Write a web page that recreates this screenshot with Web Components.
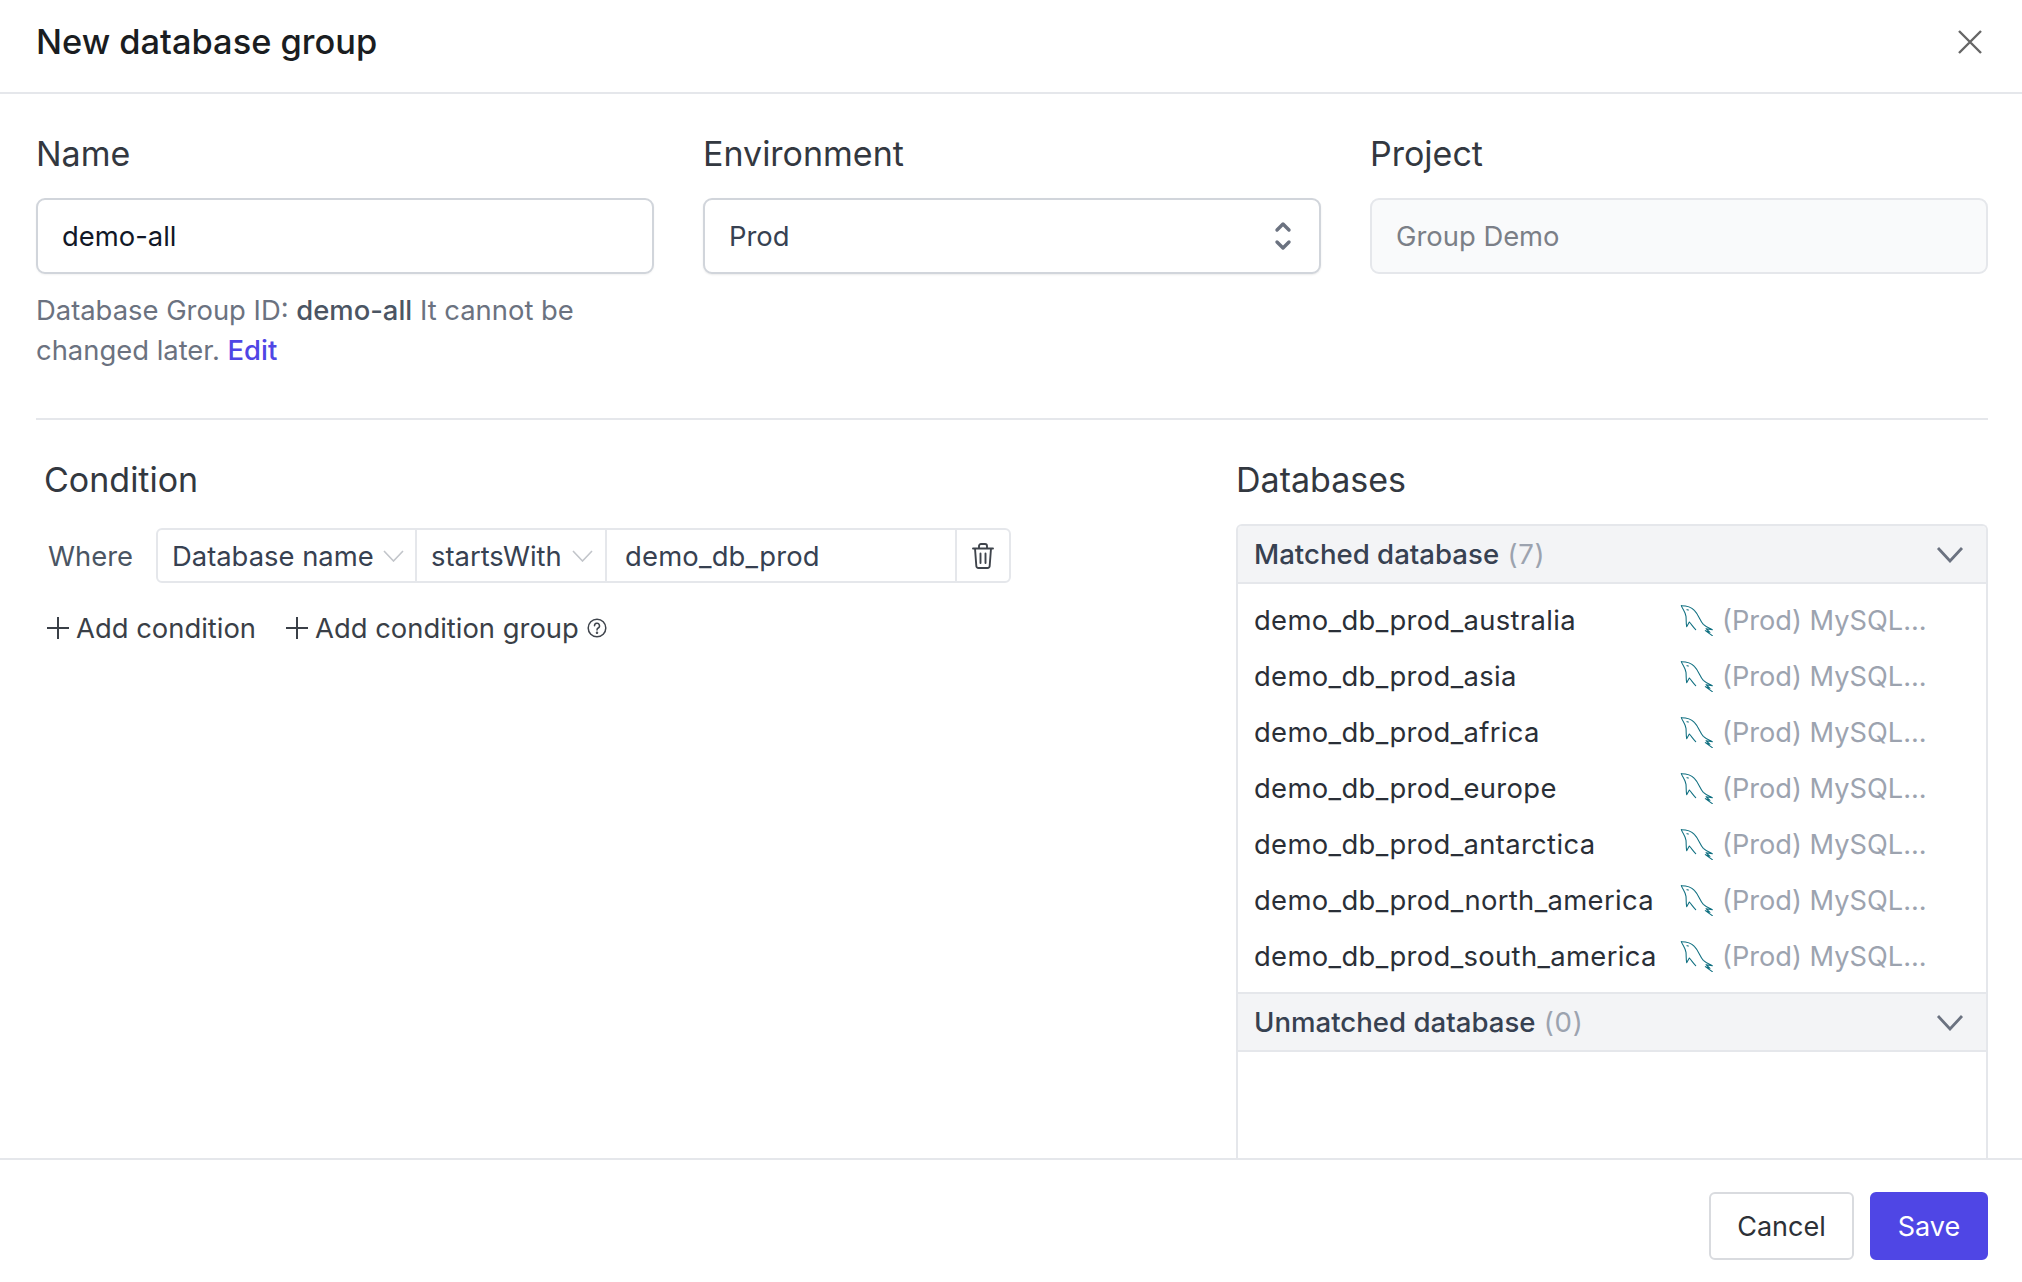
<!DOCTYPE html>
<html lang="en"><head><meta charset="utf-8"><title>New database group</title>
<style>
html,body{margin:0;padding:0;background:#fff}
body{font-family:Inter,"Liberation Sans",sans-serif;font-size:27.4px;color:#1f2937}
</style></head><body>
<modal-dialog heading="New database group">
  <form-field label="Name">
    <text-box value="demo-all"></text-box>
    <field-help><span>Database Group ID: </span><b>demo-all</b><span> It cannot be </span><span>changed later. </span><a>Edit</a></field-help>
  </form-field>
  <form-field label="Environment"><select-box value="Prod"></select-box></form-field>
  <form-field label="Project"><text-box value="Group Demo" disabled></text-box></form-field>
</modal-dialog>
<script>
const ICONS={
 close:'<svg width="24" height="24" viewBox="0 0 24 24" fill="none" stroke="#666" stroke-width="2.4"><path d="M1 1l22 22M23 1L1 23"/></svg>',
 stepper:'<svg width="18" height="30" viewBox="0 0 18 30" fill="none" stroke="#6b7280" stroke-width="3.4" stroke-linecap="round" stroke-linejoin="round"><path d="M3 9l6-6 6 6M3 21l6 6 6-6"/></svg>',
 chev:'<svg width="21" height="12" viewBox="0 0 21 12" fill="none" stroke="#c2c5ca" stroke-width="1.6"><path d="M1 1l9.500 10L20 1"/></svg>',
 chevBig:'<svg width="28" height="17" viewBox="0 0 28 17" fill="none" stroke="#6b7280" stroke-width="2.8"><path d="M2 2l12 13L26 2"/></svg>',
 trash:'<svg width="22" height="26" viewBox="0 0 22 26" fill="none" stroke="#3f444c" stroke-width="1.900" stroke-linejoin="round" stroke-linecap="round"><path d="M1 5.500h20M7 5.500V3a2 2 0 0 1 2-2h4a2 2 0 0 1 2 2v2.500M3 5.500l1.300 17.200A2.200 2.200 0 0 0 6.500 25h9a2.200 2.200 0 0 0 2.200-2.300L19 5.500M8.500 10.500v9.500M13.500 10.500v9.500"/></svg>',
 plus:'<svg width="22" height="22" viewBox="0 0 22 22" fill="none" stroke="#3a3f47" stroke-width="2"><path d="M11 0v22M0 11h22"/></svg>',
 help:'<svg width="20" height="20" viewBox="0 0 20 20" fill="none" stroke="#3f444c" stroke-width="1.500" stroke-linecap="round"><circle cx="10" cy="10" r="8.800"/><path d="M7.500 7.800a2.500 2.500 0 1 1 3.700 2.200c-.8.500-1.200 1-1.200 1.900"/><circle cx="10" cy="14.700" r=".5"/></svg>',
 mysql:'<svg width="33" height="31" viewBox="63 42 99 93" fill="none" stroke="#0f6f80" stroke-width="3.200" stroke-linejoin="round" stroke-linecap="round"><path d="M67 44C80 44 95 46 106 58C119 71 122 88 133 100C140 107 150 111 160 116L141 113L153 124L139 119L160 134"/><path d="M67 44C71 55 79 62 81 76C82 88 81 98 83 107L91 93C97 100 103 108 110 116"/><path d="M84 56l4 1"/></svg>'
};
function def(name,css,render){
  customElements.define(name,class extends HTMLElement{
    connectedCallback(){
      if(this.shadowRoot)return;
      const r=this.attachShadow({mode:'open'});
      r.innerHTML='<style>'+css+'</style>'+render(this);
    }
  });
}
const a=(e,n)=>e.getAttribute(n)||'';
def('ui-icon',':host{display:inline-flex;align-items:center;justify-content:center;flex:none}',e=>ICONS[a(e,'name')]);
def('text-box',`:host{display:flex;align-items:center;box-sizing:border-box;height:76px;border:2px solid #d1d5db;border-radius:9px;padding:0 24px;background:#fff;color:#111827;font-size:27.400px;box-shadow:0 1px 2px rgba(0,0,0,.05)}
:host([disabled]){background:#f9fafb;border-color:#e5e7eb;color:#7b7f87;box-shadow:none}`,e=>`<span>${a(e,'value')}</span>`);
def('select-box',`:host{display:flex;align-items:center;justify-content:space-between;box-sizing:border-box;height:76px;border:2px solid #d1d5db;border-radius:9px;padding:0 27px 0 24px;background:#fff;color:#374151;font-size:27.400px;box-shadow:0 1px 2px rgba(0,0,0,.08)}`,e=>`<span>${a(e,'value')}</span><ui-icon name="stepper"></ui-icon>`);
def('field-help',`:host{display:block;margin-top:16px;font-size:27.400px;line-height:40px;color:#6b7280}
::slotted(b){font-weight:500;color:#4b5563}
::slotted(a){font-weight:500;color:#4f46e5}`,e=>`<slot></slot>`);
def('form-field',`:host{display:block}
.l{font-size:34px;line-height:40px;height:40px;margin-bottom:24px;color:#333840}`,e=>`<div class="l">${a(e,'label')}</div><slot></slot>`);
def('section-title',`:host{display:block;font-size:34px;line-height:40px;height:40px;color:#333840}`,e=>`<slot></slot>`);
def('cond-select',`:host{display:flex;align-items:center;justify-content:space-between;box-sizing:border-box;height:100%;color:#374151;border-right:2px solid #e5e7eb;flex:none}
`,e=>`<span>${a(e,'value')}</span><ui-icon name="chev"></ui-icon>`);
def('condition-row',`:host{display:flex;align-items:center;height:55px;font-size:27.400px}
.w{width:112px;padding-left:4px;box-sizing:border-box;color:#4b5563;flex:none}
.g{display:flex;align-items:stretch;box-sizing:border-box;width:855px;height:55px;border:2px solid #e5e7eb;border-radius:6px}
cond-select:nth-of-type(1){width:259px;padding:0 11px 0 14px}
cond-select:nth-of-type(2){width:190px;padding:0 12px 0 14px}
.v{width:350px;box-sizing:border-box;padding-left:18px;display:flex;align-items:center;color:#374151;border-right:2px solid #e5e7eb;letter-spacing:.2px}
.d{flex:1;display:flex;align-items:center;justify-content:center}`,e=>`<span class="w">Where</span><div class="g"><cond-select value="Database name"></cond-select><cond-select value="startsWith"></cond-select><div class="v">demo_db_prod</div><div class="d"><ui-icon name="trash"></ui-icon></div></div>`);
def('add-actions',`:host{display:flex;align-items:center;height:40px;margin-top:25px;font-size:27.400px;color:#3a3f47;padding-left:3px}
.b{display:flex;align-items:center;gap:7px}
.b+.b{margin-left:30px}
.h{margin-left:8px}`,e=>`<span class="b"><ui-icon name="plus"></ui-icon>Add condition</span><span class="b"><ui-icon name="plus"></ui-icon>Add condition group</span><ui-icon class="h" name="help"></ui-icon>`);
def('db-row',`:host{display:flex;align-items:center;height:56px;padding-left:16px;font-size:27.400px;color:#2a2f37}
.n{width:426px;flex:none;white-space:nowrap;letter-spacing:.35px}
.t{margin-left:9px;color:#9ca3af;white-space:nowrap;font-size:27.200px}`,e=>`<span class="n">${a(e,'name')}</span><ui-icon name="mysql"></ui-icon><span class="t">(Prod) MySQL...</span>`);
def('db-group',`:host{display:block}
.h{display:flex;align-items:center;justify-content:space-between;box-sizing:border-box;height:58px;padding:0 22px 0 16px;background:#f3f4f6;border-bottom:2px solid #e5e7eb;font-weight:500;font-size:27.600px;color:#374151}
:host([next]) .h{border-top:2px solid #e5e7eb;height:60px}
.c{color:#9ca3af;font-weight:400;margin-left:1px;letter-spacing:.7px}
.r{padding:8px 0 8px}`,e=>`<div class="h"><span>${a(e,'heading')} <span class="c">(${a(e,'count')})</span></span><ui-icon name="chevBig"></ui-icon></div><div class="r"><slot></slot></div>`);
def('db-panel',`:host{display:block;box-sizing:border-box;border:2px solid #e5e7eb;border-bottom:0;border-radius:6px 6px 0 0;height:800px;overflow:hidden}`,e=>`<slot></slot>`);
def('ui-button',`:host{display:inline-flex;align-items:center;justify-content:center;box-sizing:border-box;height:68px;border:2px solid #d9dbdf;border-radius:6px;background:#fff;color:#2d3137;font-size:27px;font-weight:400}
:host([primary]){background:#4f46e5;border-color:#4f46e5;color:#fff}`,e=>`<slot></slot>`);
customElements.define('modal-dialog',class extends HTMLElement{
  connectedCallback(){
    const r=this.attachShadow({mode:'open'});
    const rows=['australia','asia','africa','europe','antarctica','north_america','south_america'].map(s=>`<db-row name="demo_db_prod_${s}"></db-row>`).join('');
    r.innerHTML=`<style>
:host{display:flex;flex-direction:column;width:2022px;height:1282px;overflow:hidden;background:#fff}
header{flex:none;display:flex;align-items:center;justify-content:space-between;box-sizing:border-box;height:94px;padding:0 40px 9px 36px;border-bottom:2px solid #e5e7eb}
h1{margin:0;font-size:34.400px;font-weight:500;color:#1a1d21}
main{flex:1;min-height:0;overflow:hidden;padding:40px 34px 0 36px}
.top{display:grid;grid-template-columns:618px 618px 618px;column-gap:49px;height:284px}
hr{border:0;height:2px;background:#e5e7eb;margin:0}
.sec{display:grid;grid-template-columns:1200px 752px;height:800px;margin-top:40px}
.l{padding-left:8px}
.l section-title{margin-bottom:28px}
.rr section-title{margin-bottom:24px}
footer{flex:none;display:flex;justify-content:flex-end;gap:16px;box-sizing:border-box;height:124px;padding:32px 34px 0 0;border-top:2px solid #e5e7eb}
.cancel{width:145px}.save{width:118px}
</style>
<header><h1>${this.getAttribute('heading')}</h1><ui-icon name="close"></ui-icon></header>
<main>
<div class="top"><slot></slot></div>
<hr>
<div class="sec">
<div class="l"><section-title>Condition</section-title><condition-row></condition-row><add-actions></add-actions></div>
<div class="rr"><section-title>Databases</section-title>
<db-panel><db-group heading="Matched database" count="7">${rows}</db-group><db-group next heading="Unmatched database" count="0"></db-group></db-panel></div>
</div>
</main>
<footer><ui-button class="cancel">Cancel</ui-button><ui-button class="save" primary>Save</ui-button></footer>`;
  }
});
</script>
</body></html>
